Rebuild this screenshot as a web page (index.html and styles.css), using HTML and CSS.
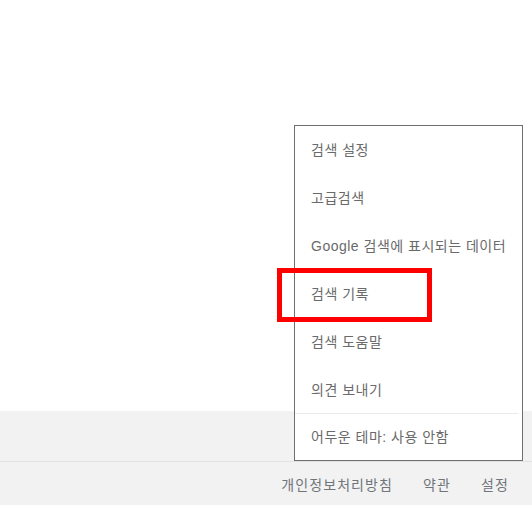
FILE: index.html
```html
<!DOCTYPE html>
<html lang="ko">
<head>
    <meta charset="UTF-8">
    <meta name="viewport" content="width=device-width, initial-scale=1.0">
    <link rel="stylesheet" href="styles.css">
    <title>Google</title>
</head>
<body>
    <div class="page">
        <div class="content"></div>
        <div class="band"></div>

        <footer class="footer">
            <a href="#">개인정보처리방침</a>
            <a href="#">약관</a>
            <a href="#">설정</a>
        </footer>

        <!-- settings menu opened from the footer -->
        <div class="menu">
            <a class="menu-item" href="#">검색 설정</a>
            <a class="menu-item" href="#">고급검색</a>
            <a class="menu-item" href="#">Google 검색에 표시되는 데이터</a>
            <a class="menu-item" href="#">검색 기록</a>
            <a class="menu-item" href="#">검색 도움말</a>
            <a class="menu-item" href="#">의견 보내기</a>
            <div class="menu-divider"></div>
            <a class="menu-item last" href="#">어두운 테마: 사용 안함</a>
        </div>

        <!-- highlight box -->
        <div class="highlight"></div>
    </div>
</body>
</html>
```

FILE: styles.css
```css
body {
    margin: 0;
    padding: 0;
    background-color: #fff;
    font-family: Arial, "Liberation Sans", "Noto Sans CJK KR", sans-serif;
}

.page {
    position: relative;
    height: 505px;
    overflow: hidden;
}

.content {
    height: 411px;
}

.band {
    height: 50px;
    background-color: #f2f2f2;
    border-bottom: 1px solid #e2e2e2;
}

.footer {
    height: 43px;
    background-color: #f2f2f2;
    display: flex;
    justify-content: flex-end;
    align-items: center;
    gap: 30px;
    padding-right: 23px;
}

.footer a {
    color: #70757a;
    font-size: 14px;
    letter-spacing: 1.1px;
    text-decoration: none;
}

.menu {
    position: absolute;
    left: 294px;
    top: 125px;
    width: 227px;
    background-color: #fff;
    border: 1px solid #6f6f6f;
}

.menu-item {
    display: block;
    height: 48px;
    line-height: 48px;
    padding-left: 16px;
    color: #6a6a6a;
    font-size: 14px;
    letter-spacing: 0.5px;
    text-decoration: none;
    white-space: nowrap;
}

.menu-item.last {
    height: 46px;
    line-height: 46px;
}

.menu-divider {
    height: 1px;
    margin: -1px 4px 0 0;
    background-color: #ebebeb;
}

.highlight {
    position: absolute;
    left: 277px;
    top: 268px;
    width: 145px;
    height: 44px;
    border: 5px solid #ff0000;
}
```
